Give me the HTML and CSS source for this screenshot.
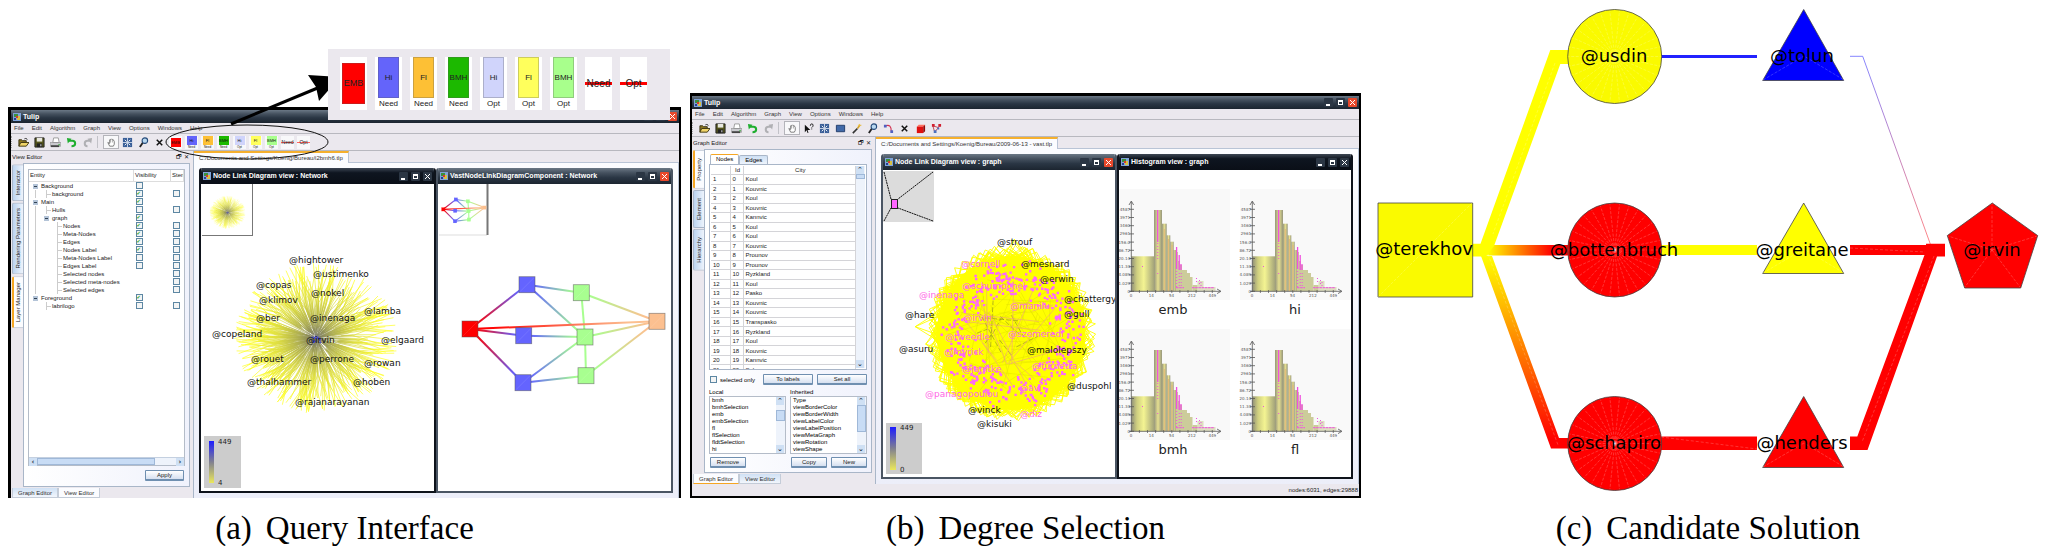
FILE: index.html
```html
<!DOCTYPE html>
<html lang="en">
<head>
<meta charset="utf-8">
<title>Tulip graph query</title>
<link rel="stylesheet" href="styles.css">
</head>
<body>
<svg class="sprite" aria-hidden="true">
  <defs>
    <symbol id="i-app" viewBox="0 0 8 8"><rect width="8" height="8" fill="#7fa3d8"/><path d="M1 1h4v3H1z" fill="#3c8f3c"/><path d="M4 3h3v4H4z" fill="#d8c040"/><path d="M3 3h2v2H3z" fill="#d83a2a"/><path d="M1 5h2v2H1z" fill="#2a3f90"/></symbol>
    <symbol id="i-open" viewBox="0 0 12 12"><path d="M1 10V3h3l1 1h4v2" fill="#8a7420" stroke="#3a3210"/><path d="M1 10l2-4h9l-3 4z" fill="#f0d468" stroke="#3a3210"/><path d="M7 2c2-1 3 0 3 1" fill="none" stroke="#222"/></symbol>
    <symbol id="i-save" viewBox="0 0 12 12"><path d="M1 1h10v10H1z" fill="#55551c" stroke="#222"/><path d="M3 1h6v4H3z" fill="#e8e8e0"/><path d="M3 7h6v4H3z" fill="#222"/><path d="M7 8h1v2H7z" fill="#eee"/></symbol>
    <symbol id="i-print" viewBox="0 0 12 12"><path d="M3 6l1-5h5l1 5z" fill="#fff" stroke="#999"/><path d="M0 6h12v4H0z" fill="#c9c9ce" stroke="#777" stroke-width=".5"/><path d="M1 9h9v2H1z" fill="#444"/><path d="M9 8h2v1H9z" fill="#3a3"/></symbol>
    <symbol id="i-undo" viewBox="0 0 12 12"><path d="M3 4h4q3 0 3 3t-4 3" fill="none" stroke="#1fae2f" stroke-width="2.2"/><path d="M1 1l5 1-4 5z" fill="#1fae2f"/></symbol>
    <symbol id="i-redo" viewBox="0 0 12 12"><path d="M9 4H6Q3 4 3 7t3 3" fill="none" stroke="#b0b0b4" stroke-width="2.2"/><path d="M11 1L6 2l4 5z" fill="#b0b0b4"/></symbol>
    <symbol id="i-hand" viewBox="0 0 12 12"><path d="M4 10L2 6l2 1V3h1l1-1 1 1h1l1 2v3l-1 2z" fill="#fff" stroke="#555" stroke-width=".8"/><path d="M5 3v3M7 3v3" stroke="#777" stroke-width=".6"/></symbol>
    <symbol id="i-select" viewBox="0 0 12 12"><path d="M1 1h10v10H1z" fill="#3a5f98"/><path d="M6 1v10M1 6h10" stroke="#cfd9ea"/><path d="M3 3l2 2M9 3L7 5M3 9l2-2M9 9L7 7" stroke="#fff"/></symbol>
    <symbol id="i-zoom" viewBox="0 0 12 12"><circle cx="7.500" cy="4" r="3" fill="#b8d8f0" stroke="#244a7a" stroke-width="1.200"/><path d="M5 6.500L2 11" stroke="#222" stroke-width="2"/></symbol>
    <symbol id="i-x" viewBox="0 0 12 12"><path d="M3 3l6 6M9 3L3 9" stroke="#111" stroke-width="1.600"/></symbol>
    <symbol id="i-help" viewBox="0 0 12 12"><path d="M2 2v8l2-2 1 3 1-.5L5 7.500h3z" fill="#111"/><path d="M8 3q0-2 1.500-2T11 2.500 9.500 5M9.500 6v1" fill="none" stroke="#111"/></symbol>
    <symbol id="i-rect" viewBox="0 0 12 12"><path d="M1.500 2.500h9v7h-9z" fill="#4169a8" stroke="#1f3a68"/></symbol>
    <symbol id="i-wand" viewBox="0 0 12 12"><path d="M2 11l5-5" stroke="#333" stroke-width="1.800"/><path d="M7 6l3-4" stroke="#d0a030" stroke-width="1.800"/><path d="M9 1v3M7.500 2.500h4" stroke="#f0c030" stroke-width=".7"/></symbol>
    <symbol id="i-curve" viewBox="0 0 12 12"><path d="M3 3q6-2 6 6" fill="none" stroke="#d03050" stroke-width="1.200"/><path d="M1 2h3v3H1zM8 8h3v3H8z" fill="#5060c0"/></symbol>
    <symbol id="i-cube" viewBox="0 0 12 12"><path d="M2 4l2-2h7l-1 2z" fill="#ff7060"/><path d="M2 4h7v7H2z" fill="#e01010"/><path d="M9 4l2-2v7l-2 2z" fill="#900808"/></symbol>
    <symbol id="i-graph" viewBox="0 0 12 12"><path d="M2 3l2 7 4-5 2-3M2 3l6 2" fill="none" stroke="#c04050"/><path d="M1 1h3v3H1zM8 1h3v3H8z" fill="#d02030"/><path d="M3 8h3v3H3zM7 5h2v2H7z" fill="#4a70c0"/></symbol>
    <linearGradient id="g-scale" x1="0" y1="0" x2="0" y2="1"><stop offset="0" stop-color="#1c1cff"/><stop offset=".5" stop-color="#808090"/><stop offset="1" stop-color="#ebe85c"/></linearGradient>
    <linearGradient id="g-wide"><stop offset="0" stop-color="#8f8f78"/><stop offset=".25" stop-color="#cfcf80"/><stop offset=".55" stop-color="#f4f492"/><stop offset="1" stop-color="#a4a47a"/></linearGradient>
    <linearGradient id="g-bar"><stop offset="0" stop-color="#96967c"/><stop offset=".5" stop-color="#e6e090"/><stop offset="1" stop-color="#96967c"/></linearGradient>
  </defs>
</svg>

<main class="page">
  <figure class="figure">
    <div class="window window-a">
      <header class="titlebar"><svg class="app-icon"><use href="#i-app"/></svg><span>Tulip</span>
        <span class="controls"><button class="ctl min" aria-label="Minimize"></button><button class="ctl max" aria-label="Restore"></button><button class="ctl close red" aria-label="Close"></button></span></header>
      <nav class="menubar"><button>File</button><button>Edit</button><button>Algorithm</button><button>Graph</button><button>View</button><button>Options</button><button>Windows</button><button>Help</button></nav>
      <div class="toolbar">
        <span class="grip"></span>
        <button aria-label="Open"><svg><use href="#i-open"/></svg></button>
        <button aria-label="Save"><svg><use href="#i-save"/></svg></button>
        <button aria-label="Print"><svg><use href="#i-print"/></svg></button>
        <button aria-label="Undo"><svg><use href="#i-undo"/></svg></button>
        <button aria-label="Redo"><svg><use href="#i-redo"/></svg></button>
        <span class="grip grip-mid"></span>
        <button class="pressed" aria-label="Navigate"><svg><use href="#i-hand"/></svg></button>
        <button aria-label="Select"><svg><use href="#i-select"/></svg></button>
        <button aria-label="Zoom"><svg><use href="#i-zoom"/></svg></button>
        <button aria-label="Delete"><svg><use href="#i-x"/></svg></button>
        <span class="chips">
          <button class="chip emb"><b>EMB</b></button>
          <button class="chip hi"><b>Hi</b><small>Need</small></button>
          <button class="chip fl"><b>Fl</b><small>Need</small></button>
          <button class="chip bmh"><b>BMH</b><small>Need</small></button>
          <button class="chip hi-opt"><b>Hi</b><small>Opt</small></button>
          <button class="chip fl-opt"><b>Fl</b><small>Opt</small></button>
          <button class="chip bmh-opt"><b>BMH</b><small>Opt</small></button>
          <button class="chip strike"><span>Need</span></button>
          <button class="chip strike"><span>Opt</span></button>
        </span>
      </div>
      <div class="content">
        <aside class="dock dock-a">
          <div class="dock-head"><span>View Editor</span><span class="dock-tools">🗗 ✕</span></div>
          <div class="dock-body">
            <div class="side-tabs"><button>Interactor</button><button>Rendering Parameters</button><button class="active">Layer Manager</button></div>
            <div class="panel">
              <div class="tree">
                <table>
                  <thead><tr><th class="c-entity">Entity</th><th class="c-vis">Visibility</th><th class="c-sten">Sten</th></tr></thead>
                  <tbody id="layers"></tbody>
                </table>
                <div class="hscroll"><button aria-label="Scroll left">‹</button><span class="thumb"></span><button aria-label="Scroll right">›</button></div>
              </div>
              <div class="apply-row"><button class="btn">Apply</button></div>
            </div>
          </div>
          <div class="bottom-tabs"><button class="idle">Graph Editor</button><button>View Editor</button></div>
        </aside>
        <section class="workspace">
          <div class="file-tabs"><button>C:/Documents and Settings/Koenig/Bureau/i2bmh6.tlp</button></div>
          <div class="desk">
            <article class="subwin dark">
              <header class="titlebar"><svg class="app-icon"><use href="#i-app"/></svg><span>Node Link Diagram view : Network</span>
                <span class="controls"><button class="ctl min" aria-label="Minimize"></button><button class="ctl max" aria-label="Maximize"></button><button class="ctl close" aria-label="Close"></button></span></header>
              <svg class="scene" viewBox="201 184 233 307">
                <defs><radialGradient id="g-burst" gradientUnits="userSpaceOnUse" cx="316" cy="338" r="84"><stop offset="0" stop-color="#6c6c60"/><stop offset=".2" stop-color="#acac50"/><stop offset=".45" stop-color="#dcdc3c"/><stop offset=".8" stop-color="#ffff20"/></radialGradient></defs>
                <path d="M252.500 184v51M202 235.500h51" stroke="#777" fill="none"/>
                <g id="burst" fill="none" stroke="url(#g-burst)" stroke-width=".7"></g>
                <use href="#burst" transform="translate(158 138) scale(.22)"/>
                <rect x="204" y="436" width="37" height="52" fill="#ccc"/><rect x="209" y="441" width="5" height="42" fill="url(#g-scale)"/>
                <g class="scale-text"><text x="218" y="444">449</text><text x="218" y="485">4</text></g>
                <g class="names"><text x="289" y="263">@hightower</text><text x="313" y="277">@ustimenko</text><text x="256" y="288">@copas</text><text x="311" y="296">@nokel</text><text x="259" y="303">@klimov</text><text x="364" y="314">@lamba</text><text x="256" y="321">@ber</text><text x="310" y="321">@inenaga</text><text x="212" y="337">@copeland</text><text x="306" y="343">@irvin</text><text x="381" y="343">@elgaard</text><text x="251" y="362">@rouet</text><text x="310" y="362">@perrone</text><text x="364" y="366">@rowan</text><text x="247" y="385">@thalhammer</text><text x="353" y="385">@hoben</text><text x="295" y="405">@rajanarayanan</text></g>
              </svg>
            </article>
            <article class="subwin">
              <header class="titlebar"><svg class="app-icon"><use href="#i-app"/></svg><span>VastNodeLinkDiagramComponent : Network</span>
                <span class="controls"><button class="ctl min" aria-label="Minimize"></button><button class="ctl max" aria-label="Maximize"></button><button class="ctl close red" aria-label="Close"></button></span></header>
              <svg class="scene" viewBox="438 184 233 307">
                <path d="M439 235h48" stroke="#ddd"/><path d="M487.500 184v51" stroke="#777" stroke-width="2"/>
                <g id="query"></g>
                <g id="query-mini" transform="translate(339.400 136.600) scale(.221)"></g>
              </svg>
            </article>
          </div>
        </section>
      </div>
      <svg class="pointer" width="344" height="92" viewBox="0 0 344 92" aria-hidden="true"><ellipse cx="239" cy="67" rx="81" ry="17" fill="none" stroke="#111"/><path d="M223 49L312 12" stroke="#000" stroke-width="3"/><path d="M300 0l32 2-21 24-3-14z" fill="#000"/></svg>
      <div class="callout">
        <div class="card emb"><b>EMB</b></div>
        <div class="card hi"><b>Hi</b><small>Need</small></div>
        <div class="card fl"><b>Fl</b><small>Need</small></div>
        <div class="card bmh"><b>BMH</b><small>Need</small></div>
        <div class="card hi-opt"><b>Hi</b><small>Opt</small></div>
        <div class="card fl-opt"><b>Fl</b><small>Opt</small></div>
        <div class="card bmh-opt"><b>BMH</b><small>Opt</small></div>
        <div class="card strike"><span>Need</span></div>
        <div class="card strike"><span>Opt</span></div>
      </div>
    </div>
    <figcaption><span>(a)</span><span>Query Interface</span></figcaption>
  </figure>

  <figure class="figure">
    <div class="window window-b">
      <header class="titlebar"><svg class="app-icon"><use href="#i-app"/></svg><span>Tulip</span>
        <span class="controls"><button class="ctl min" aria-label="Minimize"></button><button class="ctl max" aria-label="Restore"></button><button class="ctl close red" aria-label="Close"></button></span></header>
      <nav class="menubar"><button>File</button><button>Edit</button><button>Algorithm</button><button>Graph</button><button>View</button><button>Options</button><button>Windows</button><button>Help</button></nav>
      <div class="toolbar">
        <span class="grip"></span>
        <button aria-label="Open"><svg><use href="#i-open"/></svg></button>
        <button aria-label="Save"><svg><use href="#i-save"/></svg></button>
        <button aria-label="Print"><svg><use href="#i-print"/></svg></button>
        <button aria-label="Undo"><svg><use href="#i-undo"/></svg></button>
        <button aria-label="Redo"><svg><use href="#i-redo"/></svg></button>
        <span class="grip grip-mid"></span>
        <button class="pressed" aria-label="Navigate"><svg><use href="#i-hand"/></svg></button>
        <button aria-label="Inspect"><svg><use href="#i-help"/></svg></button>
        <button aria-label="Select"><svg><use href="#i-select"/></svg></button>
        <button aria-label="Rectangle"><svg><use href="#i-rect"/></svg></button>
        <button aria-label="Magic selection"><svg><use href="#i-wand"/></svg></button>
        <button aria-label="Zoom"><svg><use href="#i-zoom"/></svg></button>
        <button aria-label="Bends"><svg><use href="#i-curve"/></svg></button>
        <button aria-label="Delete"><svg><use href="#i-x"/></svg></button>
        <button aria-label="Add node"><svg><use href="#i-cube"/></svg></button>
        <button aria-label="Add edge"><svg><use href="#i-graph"/></svg></button>
      </div>
      <div class="content">
        <aside class="dock dock-b">
          <div class="dock-head"><span>Graph Editor</span><span class="dock-tools">🗗 ✕</span></div>
          <div class="dock-body">
            <div class="side-tabs"><button class="active">Property</button><button>Element</button><button>Hierarchy</button></div>
            <div class="panel">
              <div class="inner-tabs"><button class="active">Nodes</button><button>Edges</button></div>
              <div class="grid-frame">
                <table><thead><tr><th class="c-num"></th><th class="c-id">Id</th><th>City</th></tr></thead><tbody id="cities"></tbody></table>
                <div class="vscroll"><button aria-label="Scroll up">⌃</button><span class="thumb thumb-s"></span><button aria-label="Scroll down">⌄</button></div>
              </div>
              <div class="options"><label><input type="checkbox"> selected only</label><button class="btn">To labels</button><button class="btn">Set all</button></div>
              <div class="lists">
                <section><h3>Local</h3><div class="list"><ul><li>bmh</li><li>bmhSelection</li><li>emb</li><li>embSelection</li><li>fl</li><li>flSelection</li><li>fldtSelection</li><li>hi</li></ul><div class="vscroll"><button aria-label="Scroll up">⌃</button><span class="thumb thumb-m"></span><button aria-label="Scroll down">⌄</button></div></div></section>
                <section><h3>Inherited</h3><div class="list"><ul><li>Type</li><li>viewBorderColor</li><li>viewBorderWidth</li><li>viewLabelColor</li><li>viewLabelPosition</li><li>viewMetaGraph</li><li>viewRotation</li><li>viewShape</li></ul><div class="vscroll"><button aria-label="Scroll up">⌃</button><span class="thumb thumb-l"></span><button aria-label="Scroll down">⌄</button></div></div></section>
              </div>
              <div class="actions"><button class="btn">Remove</button><button class="btn">Copy</button><button class="btn">New</button></div>
            </div>
          </div>
          <div class="bottom-tabs"><button class="current">Graph Editor</button><button class="idle">View Editor</button></div>
        </aside>
        <section class="workspace">
          <div class="file-tabs"><button>C:/Documents and Settings/Koenig/Bureau/2009-06-13 - vast.tlp</button></div>
          <div class="desk">
            <article class="subwin">
              <header class="titlebar"><svg class="app-icon"><use href="#i-app"/></svg><span>Node Link Diagram view : graph</span>
                <span class="controls"><button class="ctl min" aria-label="Minimize"></button><button class="ctl max" aria-label="Maximize"></button><button class="ctl close red" aria-label="Close"></button></span></header>
              <svg class="scene" viewBox="883 170 232 307">
                <rect x="883" y="171" width="51" height="51" fill="#dcdcdc"/>
                <path d="M884 172l7 27M933 172l-35 27M884 221l7-13M933 221l-35-13" stroke="#111" stroke-dasharray="2 .6" fill="none"/>
                <rect x="891.500" y="199.500" width="6" height="9" fill="#ff66ff" stroke="#222"/>
                <g id="disc"></g>
                <rect x="886" y="423" width="36" height="51" fill="#ccc"/><rect x="890" y="427" width="6" height="43" fill="url(#g-scale)"/>
                <g class="scale-text"><text x="900" y="430">449</text><text x="900" y="472">0</text></g>
                <g class="names picked"><text x="961" y="267">@cornell</text><text x="962" y="289">@schumpchel</text><text x="919" y="298">@inenaga</text><text x="1010" y="309">@manilu</text><text x="963" y="321">@irvin</text><text x="1008" y="337">@szemeredi</text><text x="945" y="340">@tweedle</text><text x="944" y="355">@myrick</text><text x="1032" y="369">@furnetta</text><text x="962" y="372">@janitke</text><text x="1019" y="391">@avi</text><text x="925" y="397">@panagopoulou</text><text x="1020" y="417">@diz</text></g>
                <g class="names"><text x="997" y="245">@strouf</text><text x="1021" y="267">@mesnard</text><text x="1040" y="282">@erwin</text><text x="1064" y="302">@chattergy</text><text x="1064" y="317">@gull</text><text x="905" y="318">@hare</text><text x="899" y="352">@asuru</text><text x="1027" y="353">@malolepszy</text><text x="1067" y="389">@duspohl</text><text x="968" y="413">@vinck</text><text x="977" y="427">@kisuki</text></g>
              </svg>
            </article>
            <article class="subwin dark">
              <header class="titlebar"><svg class="app-icon"><use href="#i-app"/></svg><span>Histogram view : graph</span>
                <span class="controls"><button class="ctl min" aria-label="Minimize"></button><button class="ctl max" aria-label="Maximize"></button><button class="ctl close" aria-label="Close"></button></span></header>
              <svg class="scene" viewBox="1119 170 232 307">
                <g id="histograms"></g>
                <g class="hist-name"><text x="1173" y="314">emb</text><text x="1295" y="314">hi</text><text x="1173" y="454">bmh</text><text x="1295" y="454">fl</text></g>
              </svg>
            </article>
          </div>
        </section>
      </div>
      <footer class="status">nodes:6031, edges:29888</footer>
    </div>
    <figcaption><span>(b)</span><span>Degree Selection</span></figcaption>
  </figure>

  <figure class="figure">
    <svg class="solution" viewBox="1370 0 676 498">
      <defs>
        <linearGradient id="g-yr" gradientUnits="userSpaceOnUse" x1="1488" y1="0" x2="1552" y2="0"><stop offset="0" stop-color="#ff0"/><stop offset="1" stop-color="#f00"/></linearGradient>
        <linearGradient id="g-yrd" gradientUnits="userSpaceOnUse" x1="0" y1="256" x2="0" y2="441"><stop offset="0" stop-color="#ff0"/><stop offset="1" stop-color="#f00"/></linearGradient>
        <linearGradient id="g-br" gradientUnits="userSpaceOnUse" x1="0" y1="56" x2="0" y2="244"><stop offset="0" stop-color="#66f"/><stop offset="1" stop-color="#f66"/></linearGradient>
      </defs>
      <path d="M1481 256h11l67 182h9v10.500h-17z" fill="url(#g-yrd)"/>
      <path d="M1480 245h88v10.500h-88z" fill="url(#g-yr)"/>
      <path d="M1472 243.700h8.500L1550.300 50h18v14h-8L1494 246l-8 10.400h-14z" fill="#ff0"/>
      <path d="M1661 55h96v3h-96z" fill="#22f"/>
      <path d="M1661 245h96v10h-96z" fill="#ff0"/>
      <path d="M1661 436.500h96V450h-96z" fill="#f00"/>
      <path d="M1850 56.300h12.700L1930.300 244" fill="none" stroke="url(#g-br)" stroke-width=".8"/>
      <path d="M1850 245h76v-1.300h19v12.700h-8L1867.500 450H1850v-13.500h7.300L1924.500 255H1850z" fill="#f00"/>
      <path d="M1850 248l75 4M1934 256l-72 186M1661 437l96 12M1488 254l70 191M1555 63l-62 171" stroke="#fff" stroke-opacity=".4" stroke-width=".5" stroke-dasharray="3 2"/>
      <g stroke="#444" stroke-width=".8">
        <path d="M1378 203h94.700v94H1378z" fill="#fafa00"/>
        <circle cx="1614.700" cy="56.500" r="47" fill="#fafa00"/>
        <circle cx="1614.700" cy="250" r="47" fill="#f00"/>
        <circle cx="1614.700" cy="443.500" r="47" fill="#f00"/>
        <path d="M1803.700 9.500l-41 71h81z" fill="#00f"/>
        <path d="M1803.700 203l-41 70.500h81z" fill="#ff0"/>
        <path d="M1803.700 396.500l-41 71h81z" fill="#f00"/>
        <path d="M1992.300 203l45.400 32.600-17 52.400h-56l-17.400-52.400z" fill="#f00"/>
      </g>
      <g id="facets" fill="none" stroke="#fff" stroke-opacity=".4" stroke-width=".5" stroke-dasharray="3 1.500">
        <path d="M1378 297l94-94M1763 80l41-24 40 24M1763 273l41-24 40 24M1763 467l41-24 40 24M1992 250v-46M1992 250l45-14M1992 250l28 37M1992 250l-27 37M1992 250l-44-14"/>
      </g>
      <g class="node-name"><text x="1424" y="255">@terekhov</text><text x="1614" y="62">@usdin</text><text x="1614" y="256">@bottenbruch</text><text x="1614" y="449">@schapiro</text><text x="1802" y="62">@tolun</text><text x="1802" y="256">@greitane</text><text x="1802" y="449">@henders</text><text x="1992" y="256">@irvin</text></g>
    </svg>
    <figcaption><span>(c)</span><span>Candidate Solution</span></figcaption>
  </figure>
</main>
<script src="views.js"></script>
</body>
</html>
```

FILE: styles.css
```css
* { box-sizing: border-box; }
body { margin: 0; background: #fff; color: #000; font-family: "Liberation Sans", Arial, sans-serif; }
button { margin: 0; padding: 0; border: 0; background: none; color: inherit; font: inherit; white-space: nowrap; }
.sprite { position: absolute; width: 0; height: 0; }

.page { display: grid; grid-template-columns: 673fr 671fr 676fr; column-gap: 9px; align-items: end; padding-left: 8px; }
.figure { margin: 0; min-width: 0; }
figcaption { display: flex; justify-content: center; gap: 14px; margin-top: 12px; font: 33px/36px "Liberation Serif", "Times New Roman", serif; }

.window { position: relative; background: #ebe8ee; border: solid #000; font-size: 6px; line-height: 8px; }
.window-a { border-width: 3px 2px 0 3px; }
.window-b { border-width: 3px 2px 2px 2px; }

.titlebar { display: flex; align-items: center; gap: 2px; height: 13px; padding: 0 2px; background: linear-gradient(#6b7886, #45515f 30%, #2a3644 60%, #1c2530); color: #fff; font-size: 7px; font-weight: bold; white-space: nowrap; }
.app-icon { width: 8px; height: 8px; flex: none; }
.controls { display: flex; gap: 3px; margin-left: auto; }
.ctl { position: relative; width: 9px; height: 9px; border-radius: 1px; background: #2b3644; color: #fff; }
.ctl::before { content: ""; position: absolute; }
.min::before { left: 2px; bottom: 1px; width: 4px; height: 2px; background: #fff; }
.max::before { inset: 2px; border: 1px solid #fff; border-top-width: 2px; }
.close::before { inset: 2px; background: linear-gradient(45deg, transparent 42%, #fff 42% 58%, transparent 58%), linear-gradient(-45deg, transparent 42%, #fff 42% 58%, transparent 58%); }
.ctl.red { background: #e8492c; }

.menubar { display: flex; gap: 8px; height: 11px; padding: 0 3px; border-bottom: 1px solid #b8b8bf; color: #333; }
.toolbar { display: flex; align-items: center; height: 17px; border-bottom: 1px solid #b8b8bf; }
.toolbar button { display: flex; flex: none; align-items: center; justify-content: center; width: 16px; height: 14px; }
.toolbar svg { width: 11px; height: 11px; }
.grip { flex: none; width: 4px; height: 12px; border-left: 1px dotted #aaa; }
.grip-mid { width: 6px; margin-left: 2px; border-left: 1px solid #c2c2c8; }
.toolbar .pressed { border: 1px solid #b4b4ba; background: #f8f8fa; }

.chips { display: flex; gap: 3px; padding-left: 2px; }
.toolbar .chip { flex-direction: column; justify-content: flex-start; width: 13px; height: 13px; background-color: #f8f8fa; color: #111; line-height: 4px; }
.chip b { width: 10px; height: 9px; background: var(--tone); font-size: 4px; line-height: 9px; text-align: center; font-weight: normal; }
.toolbar .chip.emb { justify-content: center; }
.chip small { font-size: 3px; line-height: 4px; }
.chip span { font-size: 5px; line-height: 13px; }
.emb { --tone: #f00; } .hi { --tone: #6464fa; } .fl { --tone: #fdc035; } .bmh { --tone: #1cb900; }
.hi-opt { --tone: #d0d4fb; } .fl-opt { --tone: #ffff5c; } .bmh-opt { --tone: #a8ff8c; }
.strike { background: linear-gradient(#f00, #f00) center / 100% 3px no-repeat; }
.toolbar .strike { background: linear-gradient(#f66, #f66) center / 100% 1px no-repeat #f8f8fa; }

.pointer { position: absolute; left: -3px; top: -35px; }
.callout { position: absolute; left: 317px; top: -61px; display: flex; gap: 8px; padding: 8px 23px 10px 12px; background: #ebe8ee; }
.card { display: flex; flex-direction: column; align-items: center; width: 27px; height: 53px; background-color: #fff; color: #222; }
.card b { width: 21px; height: 41px; border: 1px solid rgba(90, 90, 90, .3); background: var(--tone); font-size: 8px; line-height: 39px; text-align: center; font-weight: normal; }
.card.emb { justify-content: center; }
.card.emb b { width: 23px; font-size: 9px; }
.card small { font-size: 8px; line-height: 12px; }
.card.strike { justify-content: center; }
.card span { font-size: 10px; line-height: 12px; }

.content { display: flex; }
.dock { display: flex; flex: none; flex-direction: column; }
.dock-a { width: 182px; }
.dock-b { width: 183px; }
.dock-head { display: flex; justify-content: space-between; height: 12px; padding: 2px 4px 0 1px; color: #222; }
.dock-tools { font-family: "DejaVu Sans", sans-serif; }
.dock-body { display: flex; flex: 1; min-height: 0; }
.side-tabs { display: flex; flex: none; flex-direction: column; gap: 1px; width: 12px; padding: 1px 0 0 1px; }
.side-tabs button { width: 11px; padding: 7px 0; border: 1px solid #a9b6c8; border-left: 0; border-radius: 0 2px 2px 0; background: linear-gradient(90deg, #eef4fc, #bcd4f0); writing-mode: vertical-rl; transform: rotate(180deg); line-height: 9px; color: #222; }
.dock-a .side-tabs button { padding: 5px 0; }
.side-tabs .active { border-right: 2px solid #f5a623; background: #fbfcff; }
.panel { display: flex; flex: 1; flex-direction: column; min-width: 0; margin-right: 3px; padding: 4px; border: 1px solid #a9b6c8; background: linear-gradient(90deg, #fff, #f0f2fc); }

.tree { display: flex; flex: 1; flex-direction: column; justify-content: space-between; margin-top: 1px; border: 1px solid #b4bcc8; background: #fff; }
table { width: 100%; border-collapse: collapse; table-layout: fixed; }
td, th { padding: 0; overflow: hidden; font-weight: normal; text-align: left; white-space: nowrap; color: #222; }
.tree thead tr { height: 11px; }
.tree th { padding-left: 1px; border-bottom: 1px solid #ddd; border-right: 1px solid #ddd; }
.c-vis { width: 37px; } .c-sten { width: 13px; }
.tree td { height: 8px; line-height: 8px; }
.tree td input { display: block; margin-left: 2px; }
.entity { display: flex; align-items: center; height: 8px; padding-left: 1px; }
.entity i { flex: none; width: 11px; height: 8px; }
.rail { background: linear-gradient(#ccc, #ccc) 5px 0 / 1px 100% no-repeat; }
.branch { background: linear-gradient(#ccc, #ccc) 5px 0 / 1px 100% no-repeat, linear-gradient(#ccc, #ccc) 5px 4px / 5px 1px no-repeat; }
.fold { background: linear-gradient(#345, #345) 4px 4px / 3px 1px no-repeat, linear-gradient(#b4c4d8, #b4c4d8) 3px 2px / 5px 5px no-repeat; }
input[type=checkbox] { appearance: none; position: relative; flex: none; width: 7px; height: 7px; margin: 0; border: 1px solid #5d87a3; background: #f3f4f4; }
input:checked::before { content: "✔"; display: block; font: 5px/5px "DejaVu Sans", sans-serif; color: #1da31d; }
.hscroll { display: flex; height: 8px; background: #eef3fb; border-top: 1px solid #c4d0e0; }
.hscroll button, .vscroll button { flex: none; width: 8px; height: 8px; background: #cfe0f4; color: #234; font: bold 7px/7px "DejaVu Sans", sans-serif; overflow: hidden; }
.thumb { border: 1px solid #9fb8d8; background: #c8dcf5; }
.hscroll .thumb { width: 76%; margin-right: auto; }
.apply-row { display: flex; justify-content: flex-end; padding: 4px 1px 1px; }
.btn { height: 11px; min-width: 36px; border: 1px solid #6f8fb0; border-width: 1px 1px 2px; border-radius: 1px; background: linear-gradient(#fff, #d6e0f0); line-height: 8px; color: #222; }
.apply-row .btn { min-width: 39px; }
.bottom-tabs { display: flex; height: 11px; padding: 1px 0 0 1px; }
.bottom-tabs button { padding: 0 5px; border: 1px solid #c4ccd8; border-top: 0; background: #fbfcff; color: #333; }
.bottom-tabs .idle { background: linear-gradient(#cfe0f4, #f2f6fc); }
.bottom-tabs .current { border-bottom: 1px solid #f5a623; }

.inner-tabs { display: flex; align-items: flex-end; height: 10px; padding-left: 1px; }
.inner-tabs button { padding: 0 5px; border: 1px solid #a9b6c8; border-bottom: 0; border-radius: 2px 2px 0 0; background: linear-gradient(#cfe0f4, #eef4fc); font-size: 6px; line-height: 8px; }
.inner-tabs .active { border-top-color: #f5a623; background: #fff; line-height: 9px; }
.grid-frame { display: flex; align-items: flex-start; height: 206px; padding: 1px; border: 1px solid #a9b6c8; background: #fff; overflow: hidden; }
.grid-frame table { height: 209px; }
.grid-frame td, .grid-frame th { padding-left: 2px; border-bottom: 1px solid #d4d4d8; border-right: 1px solid #d4d4d8; line-height: 8px; }
.grid-frame th { text-align: center; }
.c-num { width: 19px; } .c-id { width: 13px; }
.vscroll { display: flex; flex: none; flex-direction: column; align-self: stretch; width: 9px; background: #eef3fb; }
.vscroll .thumb-s { height: 5px; margin-bottom: auto; }
.vscroll .thumb-m { height: 11px; margin: 5px 0 auto; }
.vscroll .thumb-l { height: 27px; margin-bottom: auto; }
.options, .actions { display: flex; align-items: center; gap: 4px; margin-top: 4px; }
.options label { display: flex; flex: 1; align-items: center; gap: 3px; padding-left: 1px; white-space: nowrap; }
.options .btn { width: 50px; }
.lists { display: grid; grid-template-columns: 1fr 1fr; gap: 4px; margin-top: 3px; }
h3 { margin: 0; font-size: 6px; line-height: 8px; font-weight: normal; }
.list { display: flex; height: 58px; border: 1px solid #b4bcc8; background: #fff; overflow: hidden; }
ul { flex: 1; margin: 0; padding: 0 0 0 2px; list-style: none; line-height: 7px; }
.actions { margin-top: 3px; padding-left: 1px; }
.actions .btn:first-child { margin-right: auto; }

.workspace { display: flex; flex: 1; flex-direction: column; min-width: 0; border-left: 1px solid #a9b6c8; }
.file-tabs { display: flex; height: 12px; border-bottom: 1px solid #b9c4d6; }
.file-tabs button { height: 12px; padding: 0 5px; border-top: 2px solid #f5b02e; border-right: 1px solid #b9c4d6; background: #fbfcff; color: #333; }
.desk { display: grid; flex: 1; grid-template-columns: 1fr 1fr; align-items: start; padding: 5px; border-right: 1px solid #b9c4d6; background: linear-gradient(#fbfcff, #eceef9); }
.subwin { min-width: 0; border: solid #4a5563; border-width: 0 2px 2px; border-radius: 3px 3px 0 0; background: #fff; overflow: hidden; }
.subwin .titlebar { height: 16px; }
.dark { border-color: #0e131b; }
.dark .titlebar { background: linear-gradient(#3c4654, #0e1520 30%, #0a0f17); }
.scene { display: block; width: 100%; height: auto; }
.scene text, .solution text { font-family: "DejaVu Sans", sans-serif; }
.names { font-size: 9px; fill: #111; }
.picked { fill: #ff66e6; }
.scale-text { font-size: 7px; fill: #222; }
.hist-name { font-size: 13px; fill: #222; text-anchor: middle; }
.tick { font-size: 4px; fill: #555; }
.solution { display: block; width: 100%; height: auto; }
.node-name { font-size: 18px; text-anchor: middle; }
.status { height: 12px; padding: 2px 1px; text-align: right; color: #222; }
```

FILE: views.js
```js
const NS = "http://www.w3.org/2000/svg";
let seed = 20090613;
const rand = () => (seed = (seed * 16807) % 2147483647) / 2147483647;

function draw(parent, tag, attrs, text) {
  const node = document.createElementNS(NS, tag);
  for (const key in attrs) node.setAttribute(key, attrs[key]);
  if (text !== undefined) node.textContent = text;
  parent.appendChild(node);
  return node;
}

// Layer tree: depth, name, visibility (1 on, 0 off, - none), stencil, has children
const layers = [
  [0, "Background", "0", "-", 1], [1, "background", "1", "0"],
  [0, "Main", "1", "-", 1], [1, "Hulls", "0", "0"], [1, "graph", "1", "-", 1],
  [2, "Nodes", "1", "0"], [2, "Meta-Nodes", "1", "0"], [2, "Edges", "1", "0"],
  [2, "Nodes Label", "1", "0"], [2, "Meta-Nodes Label", "0", "0"], [2, "Edges Label", "0", "0"],
  [2, "Selected nodes", "-", "0"], [2, "Selected meta-nodes", "-", "0"], [2, "Selected edges", "-", "0"],
  [0, "Foreground", "1", "-", 1], [1, "labrilogo", "0", "0"]
];
const box = (state, label) => state === "-" ? "" :
  `<input type="checkbox" aria-label="${label}"${state === "1" ? " checked" : ""}>`;
document.getElementById("layers").innerHTML = layers.map(([depth, name, vis, sten, parent]) => {
  const guides = (depth > 0 ? (name === "labrilogo" ? "<i></i>" : '<i class="rail"></i>') : "") +
    (depth > 1 ? "<i></i>" : "") + `<i class="${parent ? "fold" : "branch"}"></i>`;
  return `<tr><td><span class="entity">${guides}${name}</span></td><td>${box(vis, name + " visible")}</td><td>${box(sten, name + " stencil")}</td></tr>`;
}).join("");

const cities = ["Koul", "Kouvnic", "Koul", "Kouvnic", "Kannvic", "Koul", "Koul", "Kouvnic", "Prounov", "Prounov",
  "Ryzkland", "Koul", "Pasko", "Kouvnic", "Kouvnic", "Transpasko", "Ryzkland", "Koul", "Kouvnic", "Kannvic", "Solvenz"];
document.getElementById("cities").innerHTML =
  cities.map((city, i) => `<tr><td>${i + 1}</td><td>${i}</td><td>${city}</td></tr>`).join("");

// Star-shaped neighbourhood around one hub
const burst = document.getElementById("burst");
let rays = "";
for (let i = 0; i < 440; i++) {
  const a = rand() * Math.PI * 2;
  const r = 40 + 42 * Math.sqrt(rand());
  const s = rand() * 26;
  const bend = a + (rand() - 0.5) * 0.35;
  const x = 316 + Math.cos(a) * r, y = 338 + Math.sin(a) * r * 0.92;
  const mx = 316 + Math.cos(bend) * r * 0.6, my = 338 + Math.sin(bend) * r * 0.55;
  rays += `M${(316 + Math.cos(bend) * s).toFixed(1)} ${(338 + Math.sin(bend) * s * 0.92).toFixed(1)}L${mx.toFixed(1)} ${my.toFixed(1)}L${x.toFixed(1)} ${y.toFixed(1)}`;
}
draw(burst, "path", { d: rays });
for (let i = 0; i < 14; i++) {
  draw(burst, "rect", { x: 311 + rand() * 9, y: 333 + rand() * 9, width: 1.5, height: 1.5, fill: "#4444dd", stroke: "none" });
}

// Query graph, drawn at full size and again in the overview corner
const nodes = {
  r: [470, 329, "#ff0000"], b1: [527, 284.7, "#6464ff"], b2: [523.7, 335.7, "#6464ff"], b3: [523, 382.7, "#6464ff"],
  g1: [581.3, 292.7, "#a8ff90"], g2: [585, 337, "#a8ff90"], g3: [586, 375.7, "#a8ff90"], o: [657, 321.3, "#fcc090"]
};
const links = [["r", "b1"], ["r", "b2"], ["r", "b3"], ["b1", "g1"], ["b1", "g2"], ["b2", "g2"], ["b3", "g2"], ["b3", "g3"],
  ["g1", "g2"], ["g2", "g3"], ["g1", "o"], ["g2", "o"], ["g3", "o"], ["r", "o"]];
function drawQuery(id, lineWidth, outline) {
  const query = document.getElementById(id);
  links.forEach(([from, to], i) => {
    const [x1, y1, c1] = nodes[from], [x2, y2, c2] = nodes[to];
    const grad = draw(query, "linearGradient", { id: `${id}-edge${i}`, gradientUnits: "userSpaceOnUse", x1, y1, x2, y2 });
    draw(grad, "stop", { offset: 0.1, "stop-color": c1 });
    draw(grad, "stop", { offset: 0.85, "stop-color": c2 });
    draw(query, "path", { d: `M${x1} ${y1}L${x2} ${y2}`, stroke: `url(#${id}-edge${i})`, "stroke-width": lineWidth });
  });
  Object.values(nodes).forEach(([x, y, fill]) => {
    draw(query, "rect", { x: x - 8, y: y - 8, width: 16, height: 16, fill, stroke: outline ? "#555" : fill, "stroke-opacity": 0.6, "stroke-width": 0.8 });
    if (outline) draw(query, "path", { d: `M${x - 7} ${y + 7}l14-14`, stroke: "#fff", "stroke-opacity": 0.2, "stroke-width": 0.5 });
  });
}
drawQuery("query", 2, true);
drawQuery("query-mini", 5, false);

// Dense graph with a ring of selected nodes
const disc = document.getElementById("disc");
const at = (a, r) => [(1011 + Math.cos(a) * r).toFixed(1), (333 + Math.sin(a) * r * 1.04).toFixed(1)];
let web = "";
for (let i = 0; i < 420; i++) {
  const a = rand() * Math.PI * 2;
  web += `M${at(a - 0.1 - rand() * 0.3, 68)}L${at(a, 73 + rand() * 12)}L${at(a + 0.1 + rand() * 0.3, 68)}`;
}
[[Math.PI * 1.02, 96], [Math.PI * 0.96, 86], [4.75, 90]].forEach(([a, r]) => {
  web += `M${at(a - 0.2, 70)}L${at(a, r)}L${at(a + 0.2, 70)}M${at(a - 0.1, 70)}L${at(a, r)}L${at(a + 0.3, 70)}`;
});
draw(disc, "path", { d: web, fill: "none", stroke: "#ffff00", "stroke-width": 0.9 });
draw(disc, "ellipse", { cx: 1011, cy: 333, rx: 74, ry: 77, fill: "#ffff00" });
let veins = "", dark = "", pink = "";
for (let i = 0; i < 60; i++) veins += `M${at(rand() * 6.3, 15 + rand() * 50)}L${at(rand() * 6.3, 15 + rand() * 50)}`;
for (let i = 0; i < 10; i++) dark += `M${at(rand() * 6.3, 8 + rand() * 30)}L${at(rand() * 6.3, 8 + rand() * 30)}`;
for (let i = 0; i < 14; i++) pink += `M${at(rand() * 6.3, 50)}L${at(rand() * 6.3, 30)}`;
draw(disc, "path", { d: veins, fill: "none", stroke: "#e2e200", "stroke-width": 0.5 });
draw(disc, "path", { d: dark, fill: "none", stroke: "#8a8a2a", "stroke-width": 0.6, "stroke-dasharray": "5 2" });
draw(disc, "path", { d: pink, fill: "none", stroke: "#f0a080", "stroke-width": 0.6 });
let dots = "";
for (let i = 0; i < 400; i++) {
  dots += `M${at(rand() * 6.3, 36 + 38 * (rand() + rand()) / 2)}h2.400v2.400h-2.400z`;
}
draw(disc, "path", { d: dots, fill: "#ff66ff" });

// Degree histograms, one per community property
const bars = [[12.3, 22.7, 67.3], [35, 8, 21], [43, 4.7, 34.7], [47.7, 3.6, 46.3], [51.3, 3.4, 52.7], [54.7, 2.3, 61],
  [57, 2, 63], [59, 2, 72], [61, 2, 76], [63, 5, 81], [68, 3, 84], [71, 2.5, 88], [73.5, 5, 96], [78.5, 6, 92], [84.5, 12, 98]];
const ticks = ["4587", "3971", "3460", "2961", "156.0", "86.72", "20.14", "11.34", "4.089", "1.029", "0"];
const histograms = document.getElementById("histograms");
[[1119, 189], [1240, 189], [1119, 329], [1240, 329]].forEach(([x, y]) => {
  const g = draw(histograms, "g", { transform: `translate(${x} ${y})` });
  draw(g, "rect", { width: 111, height: 111, fill: "#f9f9f9" });
  bars.forEach(([bx, w, top], i) => draw(g, "rect", {
    x: bx, y: top, width: w, height: 102.3 - top, fill: i === 0 ? "url(#g-wide)" : i < 6 ? "url(#g-bar)" : "#cccc9a", opacity: i > 12 ? 0.6 : 1
  }));
  draw(g, "path", { d: "M45.300 40v62M49.500 50v52M53 56v46", stroke: "#e6b070", "stroke-width": 0.8 });
  draw(g, "path", { d: "M38.700 21v32M57.600 58v22M60.200 66v15M62 75v6", stroke: "#f050e0", "stroke-width": 1.3, fill: "none" });
  draw(g, "path", { d: "M38.700 54v17M38.700 84v1M57.600 82v16M60.200 84v14M62.200 84v14M23 77.500h1M77.500 89v5M80.500 91v4M82 93v4", stroke: "#f050e0", "stroke-dasharray": "1 2", fill: "none" });
  draw(g, "path", { d: "M57 98.700h8M73 98.700h22", stroke: "#f050e0", "stroke-dasharray": "2.500 .7", fill: "none" });
  draw(g, "path", { d: "M12.300 13v90M10 16l2.300-4 2.300 4M11 102.300h90M98 100l4 2.300-4 2.300", stroke: "#555", "stroke-width": 0.8, fill: "none" });
  ticks.forEach((t, i) => {
    const ty = 20.3 + i * 8.2;
    draw(g, "path", { d: `M10 ${ty}h5`, stroke: "#555", "stroke-width": 0.8 });
    draw(g, "text", { class: "tick", x: 11, y: ty + 1.5, "text-anchor": "end" }, t);
  });
  for (let i = 1; i < 11; i++) draw(g, "path", { d: `M${12.3 + i * 8.1} 101v3`, stroke: "#555", "stroke-width": 0.7 });
  ["0", "14", "54", "212", "449"].forEach((t, i) => draw(g, "text", { class: "tick", x: 12 + i * 20.3, y: 108, "text-anchor": "middle" }, t));
});

// Triangle fans inside the round nodes
let fan = "";
[56.5, 250, 443.5].forEach(cy => {
  for (let i = 0; i < 30; i++) {
    const a = i * Math.PI / 15;
    fan += `M1614.700 ${cy}L${1614.7 + Math.cos(a) * 46} ${cy + Math.sin(a) * 46}`;
  }
});
draw(document.getElementById("facets"), "path", { d: fan });
```
